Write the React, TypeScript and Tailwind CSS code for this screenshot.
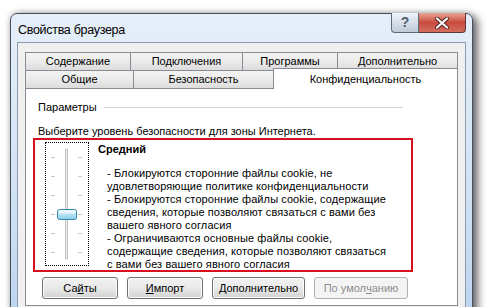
import React from "react";

const font = { fontFamily: '"Liberation Sans", Arial, sans-serif' };

function Tab({ w, children, last }: { w: number; children: React.ReactNode; last?: boolean }) {
  return (
    <div
      className={`h-full shrink-0 flex items-center justify-center border-t border-l ${last ? "border-r" : ""} border-[#898c95] bg-gradient-to-b from-[#f3f3f3] via-[#ebebeb] to-[#dcdcdc] text-[11px] text-black`}
      style={{ width: w }}
    >
      {children}
    </div>
  );
}

function Btn({ w, children, disabled }: { w: number; children: React.ReactNode; disabled?: boolean }) {
  return (
    <div
      className={`h-[22px] flex items-center justify-center rounded-[3px] border text-[11px] ${
        disabled
          ? "border-[#adb2b5] bg-[#f4f4f4] text-[#8d8d8d]"
          : "border-[#707070] bg-gradient-to-b from-[#f2f2f2] via-[#e9e9e9] to-[#d3d3d3] text-black shadow-[inset_0_0_0_1px_#fcfcfc]"
      }`}
      style={{ width: w }}
    >
      {children}
    </div>
  );
}

function Slider() {
  const ticks = [15, 34, 53, 72, 91, 110];
  return (
    <svg width="42" height="122" viewBox="0 0 42 122" className="block">
      <defs>
        <linearGradient id="th" x1="0" y1="0" x2="0" y2="1">
          <stop offset="0" stopColor="#eaf8fe" />
          <stop offset="0.5" stopColor="#b4e2f5" />
          <stop offset="1" stopColor="#86cdec" />
        </linearGradient>
      </defs>
      <rect x="19.5" y="6.5" width="2" height="109" fill="#f4f4f4" stroke="#bdbdbd" />
      {ticks.map((y) => (
        <g key={y}>
          <line x1="5" y1={y - 0.5} x2="9" y2={y - 0.5} stroke="#c8c8c8" />
          <line x1="32" y1={y - 0.5} x2="36" y2={y - 0.5} stroke="#c8c8c8" />
        </g>
      ))}
      <rect x="11.5" y="66.5" width="19" height="10" rx="2" fill="url(#th)" stroke="#3a87ad" />
      <rect x="12.5" y="67.5" width="17" height="3" rx="1" fill="#ffffff" opacity="0.55" />
    </svg>
  );
}

export default function App() {
  return (
    <div className="w-[490px] h-[307px] bg-white overflow-hidden pl-[10px] pt-[13px]" style={font}>
      <div className="w-[463px] h-[330px] rounded-t-[7px] border border-[#44505c] bg-gradient-to-b from-[#e6eff9] via-[#d3e3f4] to-[#b9d2ee] shadow-[5px_3px_9px_rgba(0,0,0,0.55),0_0_6px_rgba(0,0,0,0.25)] flex flex-col">
        {/* title bar */}
        <div className="h-[28px] shrink-0 flex items-start pl-[7px] pr-[6px]">
          <span className="mt-[8px] text-[12.5px] leading-[16px] tracking-[-0.3px] text-black">Свойства браузера</span>
          <div className="ml-auto flex -mt-px">
            <div className="w-[28px] h-[20px] rounded-bl-[4px] border border-t-0 border-[#5b6a7a] bg-gradient-to-b from-[#eef3f8] via-[#d6dfe9] to-[#bfcbd9] flex items-center justify-center text-[14px] font-bold text-[#4e5d6e]">
              ?
            </div>
            <div className="w-[47px] h-[20px] rounded-br-[4px] border border-t-0 border-l-0 border-[#5b3a36] bg-gradient-to-b from-[#e8a596] via-[#c84a3d] to-[#d36e5f] flex items-center justify-center">
              <svg width="14" height="12" viewBox="0 0 14 12">
                <path d="M2 1.5 L12 10.5 M12 1.5 L2 10.5" stroke="#4a2020" strokeWidth="4" strokeLinecap="round" />
                <path d="M2 1.5 L12 10.5 M12 1.5 L2 10.5" stroke="#ffffff" strokeWidth="2.2" strokeLinecap="round" />
              </svg>
            </div>
          </div>
        </div>
        {/* client area */}
        <div className="mx-[6px] flex-1 bg-[#f0f0f0] border border-[#8b9cb0] pt-[9px] pl-[7px] pr-[7px]">
          <div className="w-[433px]">
            {/* tab row 1 */}
            <div className="flex h-[18px]">
              <Tab w={105}>Содержание</Tab>
              <Tab w={112}>Подключения</Tab>
              <Tab w={95}>Программы</Tab>
              <Tab w={121} last>
                Дополнительно
              </Tab>
            </div>
            {/* tab row 2 */}
            <div className="flex h-[18px] items-end">
              <Tab w={108}>Общие</Tab>
              <Tab w={140}>Безопасность</Tab>
              <div className="relative z-10 w-[185px] h-[21px] -mb-px shrink-0 border-t border-l border-r border-[#898c95] bg-white flex items-start justify-center pt-[2px] text-[11px] text-black">
                Конфиденциальность
              </div>
            </div>
            {/* panel */}
            <div className="h-[218px] border border-[#898c95] bg-white pl-[7px] pt-[12px] text-[11px] leading-[13px] text-black">
              <div className="flex items-center pl-[5px] w-[370px]">
                <span>Параметры</span>
                <div className="flex-1 ml-[7px] h-px bg-[#d0d5da]" />
              </div>
              <div className="mt-[11px] pl-[5px]">Выберите уровень безопасности для зоны Интернета.</div>
              <div className="w-[380px] h-[134px] border-2 border-[#d8101e] flex pl-[10px] pt-[2px]">
                <div className="w-[44px] h-[124px] shrink-0 border border-dotted border-black">
                  <Slider />
                </div>
                <div className="ml-[9px] pt-[1px]">
                  <div className="font-bold">Средний</div>
                  <div className="mt-[11px] pl-[9px] whitespace-nowrap tracking-[0.1px]">
                    <div>- Блокируются сторонние файлы cookie, не</div>
                    <div>удовлетворяющие политике конфиденциальности</div>
                    <div>- Блокируются сторонние файлы cookie, содержащие</div>
                    <div>сведения, которые позволяют связаться с вами без</div>
                    <div>вашего явного согласия</div>
                    <div>- Ограничиваются основные файлы cookie,</div>
                    <div>содержащие сведения, которые позволяют связаться</div>
                    <div>с вами без вашего явного согласия</div>
                  </div>
                </div>
              </div>
              <div className="flex gap-[9px] mt-[5px] pl-[9px]">
                <Btn w={76}>
                  Са<u className="underline-offset-1">й</u>ты
                </Btn>
                <Btn w={76}>
                  <u className="underline-offset-1">И</u>мпорт
                </Btn>
                <Btn w={93}>Дополнительно</Btn>
                <Btn w={94} disabled>
                  По умол<u className="underline-offset-1">ч</u>анию
                </Btn>
              </div>
            </div>
          </div>
        </div>
      </div>
    </div>
  );
}
